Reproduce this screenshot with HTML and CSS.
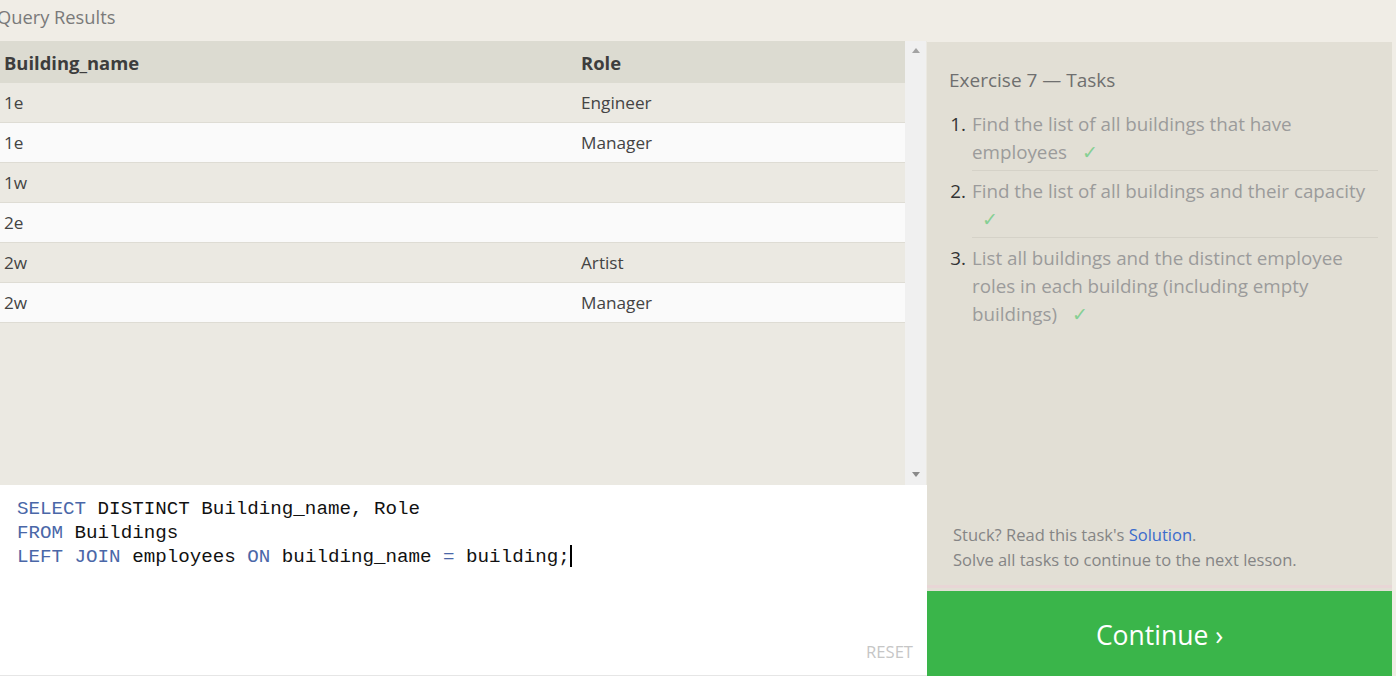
FILE: index.html
```html
<!DOCTYPE html>
<html>
<head>
<meta charset="utf-8">
<link rel="stylesheet" href="styles.css">
</head>
<body>
<div class="page">
  <div class="topbar">Query Results</div>
  <div class="main">
    <div class="left">
      <div class="results">
        <div class="table-wrap">
          <table class="grid">
            <thead>
              <tr><th class="c1">Building_name</th><th>Role</th></tr>
            </thead>
            <tbody>
              <tr class="odd"><td>1e</td><td>Engineer</td></tr>
              <tr class="even"><td>1e</td><td>Manager</td></tr>
              <tr class="odd"><td>1w</td><td></td></tr>
              <tr class="even"><td>2e</td><td></td></tr>
              <tr class="odd"><td>2w</td><td>Artist</td></tr>
              <tr class="even"><td>2w</td><td>Manager</td></tr>
            </tbody>
          </table>
        </div>
        <div class="scrollbar">
          <span class="arrow up"></span>
          <span class="arrow down"></span>
        </div>
      </div>
      <div class="editor">
        <pre class="code"><span class="kw">SELECT</span> DISTINCT Building_name, Role
<span class="kw">FROM</span> Buildings
<span class="kw">LEFT JOIN</span> employees <span class="kw">ON</span> building_name <span class="kw">=</span> building;<span class="caret"></span></pre>
        <div class="reset">RESET</div>
      </div>
    </div>
    <div class="right">
      <div class="tasks">
        <h2 class="title">Exercise 7 — Tasks</h2>
        <ol class="list">
          <li><span class="num">1.</span><span class="txt">Find the list of all buildings that have employees <span class="check">✓</span></span></li>
          <li><span class="num">2.</span><span class="txt">Find the list of all buildings and their capacity <span class="check">✓</span></span></li>
          <li class="last"><span class="num">3.</span><span class="txt">List all buildings and the distinct employee roles in each building (including empty buildings) <span class="check">✓</span></span></li>
        </ol>
        <div class="spacer"></div>
        <p class="hint">Stuck? Read this task's <a class="link">Solution</a>.<br>Solve all tasks to continue to the next lesson.</p>
      </div>
      <div class="continue">Continue ›</div>
    </div>
    <div class="edge"></div>
  </div>
</div>
</body>
</html>
```
FILE: styles.css
```css
html, body {
  margin: 0;
  padding: 0;
}
body {
  background: #f0ede6;
  font-family: "Open Sans", "Noto Sans", sans-serif;
}
.page {
  width: 1396px;
  height: 676px;
  overflow: hidden;
  display: flex;
  flex-direction: column;
}
.topbar {
  height: 41px;
  line-height: 34px;
  font-size: 18.3px;
  color: #7a7a7a;
  text-indent: -3px;
  background: #f0ede6;
  flex: none;
}
.main {
  flex: 1;
  display: flex;
  min-height: 0;
}
.left {
  width: 927px;
  display: flex;
  flex-direction: column;
  flex: none;
}
.results {
  height: 444px;
  display: flex;
  background: #ebe9e2;
  flex: none;
}
.table-wrap {
  width: 905px;
  flex: none;
}
.grid {
  width: 100%;
  border-collapse: collapse;
  font-size: 17.2px;
  color: #444;
}
.grid th {
  text-align: left;
  font-weight: 700;
  font-size: 18.4px;
  color: #3d3d3d;
  background: #dcdbd1;
  height: 42px;
  padding: 0 0 0 4px;
}
.grid th.c1 {
  width: 573px;
}
.grid td {
  height: 39px;
  padding: 0 0 0 4px;
  border-bottom: 1px solid #dedcd4;
}
.grid tr.odd td {
  background: #ebe9e2;
}
.grid tr.even td {
  background: #fafafa;
}
.scrollbar {
  width: 21px;
  background: #f0f0f0;
  display: flex;
  flex-direction: column;
  justify-content: space-between;
  align-items: center;
  padding: 7px 0 8px;
  box-sizing: border-box;
}
.arrow {
  width: 0;
  height: 0;
  border-left: 4px solid transparent;
  border-right: 4px solid transparent;
}
.arrow.up {
  border-bottom: 5px solid #a3a3a3;
}
.arrow.down {
  border-top: 5px solid #8a8a8a;
}
.editor {
  flex: 1;
  background: #ffffff;
  position: relative;
  border-bottom: 1px solid #e6e6e6;
}
.code {
  margin: 0;
  padding: 12px 0 0 17px;
  font-family: "Liberation Mono", "DejaVu Sans Mono", monospace;
  font-size: 19.2px;
  line-height: 24px;
  color: #111;
}
.kw {
  color: #4a67a8;
}
.caret {
  display: inline-block;
  width: 2px;
  height: 22px;
  background: #000;
  vertical-align: -5px;
}
.reset {
  position: absolute;
  right: 14px;
  bottom: 12px;
  font-size: 16.6px;
  color: #c6c6c6;
}
.right {
  width: 465px;
  flex: none;
  display: flex;
  flex-direction: column;
  background: #e2dfd5;
  margin-top: 1px;
}
.tasks {
  flex: 1;
  display: flex;
  flex-direction: column;
  padding: 24px 14px 0 22px;
  border-bottom: 3px solid #e8d6d6;
  margin-bottom: 3px;
}
.title {
  margin: 0;
  font-weight: 400;
  font-size: 19px;
  color: #6f6f6f;
  line-height: 28px;
}
.list {
  list-style: none;
  margin: 16px 0 0 0;
  padding: 0;
  font-size: 18.8px;
  line-height: 28px;
  color: #9b9b9b;
}
.list li {
  display: flex;
  margin-bottom: 6px;
}
.num {
  width: 17px;
  flex: none;
  text-align: right;
  padding-right: 6px;
  color: #333;
}
.txt {
  flex: 1;
  padding-bottom: 4px;
  border-bottom: 1px solid #d5d2c8;
}
.list li.last .txt {
  border-bottom: none;
}
.check {
  color: #86cf93;
  margin-left: 10px;
}
.spacer {
  flex: 1;
}
.hint {
  margin: 0 0 13px 4px;
  font-size: 16.5px;
  line-height: 25px;
  color: #858585;
}
.link {
  color: #3b6bcc;
}
.continue {
  height: 85px;
  box-sizing: border-box;
  padding-top: 3px;
  background: #3ab54a;
  color: #ffffff;
  font-size: 26.5px;
  display: flex;
  align-items: center;
  justify-content: center;
  flex: none;
}
.edge {
  width: 4px;
  background: #f0ede6;
  flex: none;
}
```
